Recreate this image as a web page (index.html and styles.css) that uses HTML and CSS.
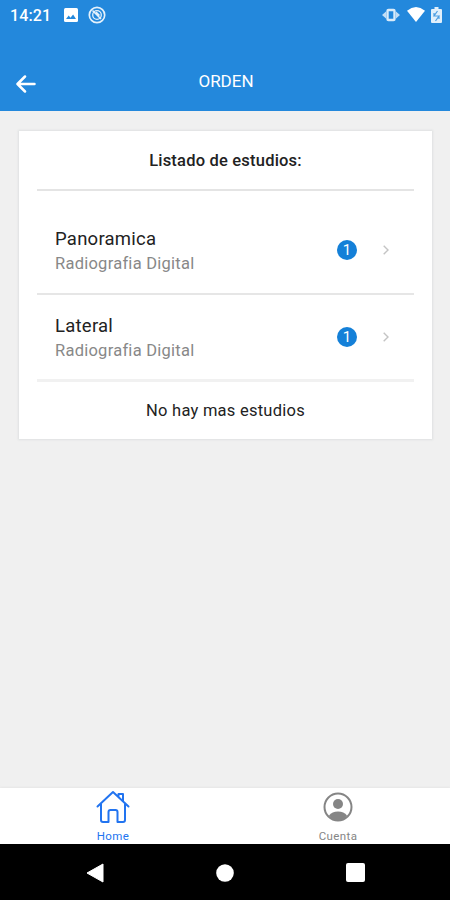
FILE: index.html
```html
<!DOCTYPE html>
<html lang="es">
<head>
    <meta charset="UTF-8">
    <meta name="viewport" content="width=device-width, initial-scale=1.0">
    <title>Orden</title>
    <link rel="stylesheet" href="styles.css">
</head>
<body>
    <header>
        <div class="status-bar">
            <span class="time">14:21</span>
            <svg class="icon-image" width="14" height="14" viewBox="0 0 14 14">
                <rect width="14" height="14" rx="1.5" fill="#fff"/>
                <path d="M2 11l2.7-3.5 1.8 2.2 2.6-3.3L12 11z" fill="#2388dc"/>
            </svg>
            <svg class="icon-sync" width="18" height="18" viewBox="0 0 18 18" fill="none" stroke="#e4f1fb">
                <circle cx="9" cy="9" r="7.7" stroke-width="1.7"/>
                <circle cx="9" cy="9" r="4.3" stroke-width="1.3"/>
                <path d="M4.5 4.5L13 13M8 6l3.500 3.500" stroke-width="1.5"/>
            </svg>
            <div class="status-right">
                <svg width="18" height="14" viewBox="0 0 18 14">
                    <path d="M0 7l4-3.5v7zM18 7l-4-3.5v7z" fill="#c3def5"/>
                    <rect x="5.5" y="2" width="7" height="10" rx="1" fill="none" stroke="#d9ebf9" stroke-width="2.4"/>
                </svg>
                <svg width="18" height="15" viewBox="0 0 18 15">
                    <path d="M9 15L0 3.7Q9-3.5 18 3.7z" fill="#fff"/>
                </svg>
                <svg width="11" height="16" viewBox="0 0 11 16">
                    <path d="M3.5 0h4v2H10q1 0 1 1v12q0 1-1 1H1q-1 0-1-1V3q0-1 1-1h2.5z" fill="#e0effb"/>
                    <path d="M6.5 4L3 9h5l-3.500 5M3 6v3M8 9v3" fill="none" stroke="#4d9ee2" stroke-width="1.2"/>
                </svg>
            </div>
        </div>
        <div class="toolbar">
            <svg class="back" width="20" height="18" viewBox="0 0 20 18" fill="none" stroke="#fff" stroke-width="2.5" stroke-linecap="round" stroke-linejoin="round">
                <path d="M9 1.5L1.5 9 9 16.5M2 9h16.5"/>
            </svg>
            <h1>ORDEN</h1>
        </div>
    </header>
    <main>
        <div class="card">
            <h2>Listado de estudios:</h2>
            <ul class="study-list">
                <li class="study">
                    <div class="study-info">
                        <h3>Panoramica</h3>
                        <p>Radiografia Digital</p>
                    </div>
                    <span class="badge">1</span>
                    <svg class="chevron" width="6" height="10" viewBox="0 0 6 10">
                        <path d="M.7.7L5 5 .7 9.3"/>
                    </svg>
                </li>
                <li class="study">
                    <div class="study-info">
                        <h3>Lateral</h3>
                        <p>Radiografia Digital</p>
                    </div>
                    <span class="badge">1</span>
                    <svg class="chevron" width="6" height="10" viewBox="0 0 6 10">
                        <path d="M.7.7L5 5 .7 9.3"/>
                    </svg>
                </li>
            </ul>
            <p class="no-more">No hay mas estudios</p>
        </div>
    </main>
    <nav class="tabs">
        <a class="tab active">
            <svg width="34" height="34" viewBox="0 0 34 34" fill="none" stroke="currentColor" stroke-width="2" stroke-linecap="round" stroke-linejoin="round">
                <path d="M1.5 16.5L17 2l15.5 14.5M5 14v16q0 2 2 2h5.5V22q0-2 2-2h5q2 0 2 2v10H27q2 0 2-2V14M22.5 6.5V4H27v7"/>
            </svg>
            <span>Home</span>
        </a>
        <a class="tab">
            <svg width="30" height="34" viewBox="0 0 30 34">
                <circle cx="15" cy="17" r="13.5" fill="none" stroke="currentColor" stroke-width="2"/>
                <circle cx="15" cy="14" r="5" fill="currentColor"/>
                <path d="M6 25.5Q9 21.5 15 21.5T24 25.5Q20.5 30.5 15 30.5T6 25.5z" fill="currentColor"/>
            </svg>
            <span>Cuenta</span>
        </a>
    </nav>
    <div class="system-nav">
        <svg width="18" height="20" viewBox="0 0 18 20"><path d="M1 10L17 1v18z" fill="#fff" stroke="#fff" stroke-linejoin="round"/></svg>
        <svg width="18" height="18" viewBox="0 0 18 18"><circle cx="9" cy="9" r="8.8" fill="#fff"/></svg>
        <svg width="19" height="19" viewBox="0 0 19 19"><rect width="19" height="19" rx="2" fill="#fff"/></svg>
    </div>
</body>
</html>
```
FILE: styles.css
```css
* {
    box-sizing: border-box;
}
body {
    font-family: Roboto, sans-serif;
    margin: 0;
    height: 900px;
    display: flex;
    flex-direction: column;
    background-color: #f0f0f0;
    color: #222;
}
h1, h2, h3, p, ul {
    margin: 0;
    padding: 0;
    font-weight: 400;
}
header {
    height: 111px;
    background-color: #2388dc;
    color: white;
}
.status-bar {
    display: flex;
    align-items: center;
    height: 30px;
    padding: 0 8px 1px 10px;
}
.time {
    width: 54px;
    padding-top: 1px;
    font-size: 16px;
    font-weight: 500;
    letter-spacing: 0.1px;
}
.icon-sync {
    margin-left: 10px;
}
.status-right {
    display: flex;
    align-items: center;
    gap: 6.5px;
    margin-left: auto;
}
.toolbar {
    display: grid;
    grid-template-columns: 20px 1fr 20px;
    align-items: center;
    height: 81px;
    padding: 21px 14px 0 16px;
}
.back {
    margin-top: 5px;
}
.toolbar h1 {
    font-size: 17px;
    line-height: 20px;
    text-align: center;
}
main {
    flex: 1;
    padding: 20px 18px 0 19px;
}
.card {
    height: 308px;
    padding: 0 18px;
    background-color: white;
    box-shadow: 0 0 2px 1px #dfe1e2;
}
.card h2 {
    height: 60px;
    border-bottom: 2px solid #e4e4e4;
    font-size: 16.5px;
    font-weight: 500;
    line-height: 60px;
    text-align: center;
    letter-spacing: 0.2px;
}
.study-list {
    list-style-type: none;
    padding-top: 17px;
}
.study {
    display: flex;
    align-items: center;
    height: 87px;
    padding: 0 25px 1px 18px;
    border-bottom: 2px solid #e6e6e6;
}
.study:last-child {
    padding-bottom: 0;
    border-bottom: 3px solid #f1f1f1;
}
.study-info {
    flex: 1;
    padding-top: 2px;
}
.study h3 {
    font-size: 18.5px;
    line-height: 26px;
    letter-spacing: 0.25px;
}
.study p {
    color: #888;
    font-size: 16.5px;
    line-height: 24px;
    letter-spacing: 0.25px;
}
.badge {
    width: 20px;
    height: 20px;
    margin-right: 26px;
    border-radius: 50%;
    background-color: #1480d8;
    color: white;
    font-size: 15px;
    line-height: 21px;
    text-align: center;
}
.chevron {
    fill: none;
    stroke: #c4c4c4;
    stroke-width: 1.4px;
}
.no-more {
    font-size: 16.5px;
    line-height: 58px;
    text-align: center;
    letter-spacing: 0.25px;
}
.tabs {
    display: flex;
    height: 56px;
    background-color: white;
    box-shadow: 0 -1px 2px #e6e6e6;
}
.tab {
    flex: 1;
    display: flex;
    flex-direction: column;
    align-items: center;
    padding-top: 2px;
    padding-left: 1px;
    color: #858585;
    font-size: 11.5px;
    line-height: 13px;
    letter-spacing: 0.4px;
}
.tab span {
    padding-top: 6px;
}
.tab.active {
    color: #2274f0;
}
.system-nav {
    display: flex;
    align-items: center;
    justify-content: space-between;
    height: 56px;
    padding: 1px 85px 0 86px;
    background-color: black;
}
```
